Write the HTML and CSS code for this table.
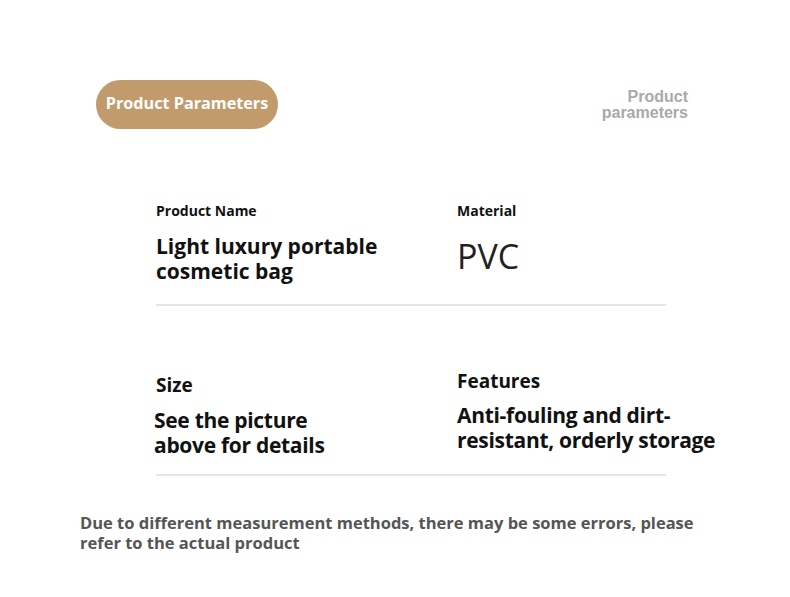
FILE: index.html
```html
<!DOCTYPE html>
<html>
<head>
<meta charset="utf-8">
<link rel="stylesheet" href="styles.css">
</head>
<body>
<div class="page">
  <header class="head">
    <div class="pill">Product Parameters</div>
    <div class="en-title">Product<br>parameters</div>
  </header>
  <section class="params">
    <div class="row row-1">
      <div class="cell">
        <div class="label small">Product Name</div>
        <div class="value">Light luxury portable<br>cosmetic bag</div>
      </div>
      <div class="cell">
        <div class="label small">Material</div>
        <div class="value pvc">PVC</div>
      </div>
    </div>
    <div class="row row-2">
      <div class="cell cell-size">
        <div class="label big">Size</div>
        <div class="value v-size">See the picture<br>above for details</div>
      </div>
      <div class="cell">
        <div class="label big">Features</div>
        <div class="value v-feat">Anti-fouling and dirt-<br>resistant, orderly storage</div>
      </div>
    </div>
  </section>
  <p class="note">Due to different measurement methods, there may be some errors, please<br>refer to the actual product</p>
</div>
</body>
</html>
```
FILE: styles.css
```css
html, body { margin: 0; padding: 0; background: #fff; }
body { font-family: "Open Sans", "Noto Sans", sans-serif; color: #111; }
.page { width: 790px; height: 597px; overflow: hidden; }
.head { display: flex; justify-content: space-between; align-items: flex-start; padding: 80px 102px 0 96px; }
.pill { width: 182px; height: 49px; box-sizing: border-box; padding-bottom: 3px; border-radius: 25px; background: #c29b6c; color: #fff; font-weight: 700; font-size: 16.2px; display: flex; align-items: center; justify-content: center; }
.en-title { font-family: "Liberation Sans", Arial, sans-serif; font-weight: 700; color: #a9a9a9; font-size: 16px; line-height: 16px; text-align: right; margin-top: 9px; }
.params { margin-left: 156px; width: 510px; }
.row { display: grid; grid-template-columns: 301px 1fr; border-bottom: 2px solid #e6e6e6; }
.row-1 { margin-top: 73px; padding-bottom: 20px; }
.row-2 { margin-top: 63px; padding-bottom: 16px; }
.label { font-weight: 700; }
.label.small { font-size: 14px; line-height: 18px; }
.label.big { font-size: 19px; line-height: 24px; }
.value { font-weight: 700; font-size: 21px; line-height: 25px; margin-top: 14px; white-space: nowrap; }
.pvc { font-weight: 400; font-size: 34px; line-height: 40px; margin-top: 16px; color: #222; }
.cell-size { padding-top: 4px; }
.v-size { margin-top: 11px; margin-left: -2px; letter-spacing: -0.3px; }
.v-feat { margin-top: 10px; letter-spacing: -0.3px; }
.note { margin: 37px 0 0 80px; font-weight: 700; font-size: 16.5px; line-height: 20px; color: #555; }
```
